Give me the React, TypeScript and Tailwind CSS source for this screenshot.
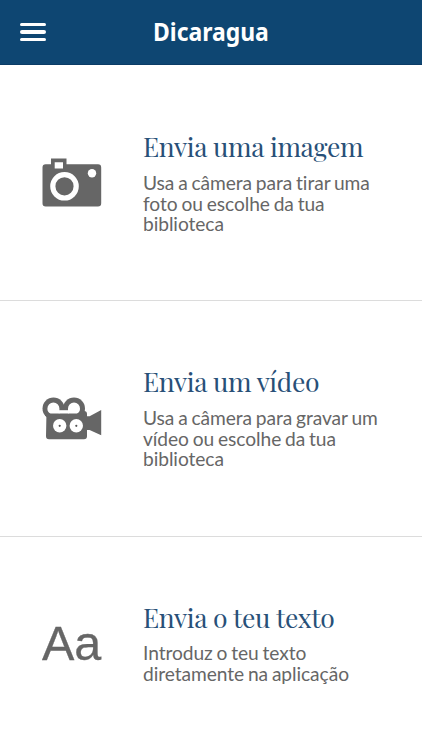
import type { ReactNode } from "react";

function CameraIcon() {
  return (
    <svg width="60" height="50" viewBox="0 0 60 50" className="block">
      <path
        fill="#666"
        fillRule="evenodd"
        d="M9 .5h15.5v5.8H56a3.2 3.2 0 0 1 3.2 3.2v35.7a3.2 3.2 0 0 1-3.2 3.2H3.7a3.2 3.2 0 0 1-3.2-3.2V9.5a3.2 3.2 0 0 1 3.2-3.2H9zM12.7 4.3v6.2H21V4.3z"
      />
      <circle cx="22.5" cy="28.3" r="11.7" fill="#666" stroke="#fff" strokeWidth="5.2" />
      <circle cx="50" cy="15.3" r="4.2" fill="#fff" />
    </svg>
  );
}

function VideoIcon() {
  return (
    <svg width="60" height="44" viewBox="0 0 60 44" className="block">
      <path
        fill="#666"
        d="M4.5 14H42a3 3 0 0 1 3 3v2.2h2.6L59.2 13v25.2L47.6 33H45v6.3a3 3 0 0 1-3 3H7a3 3 0 0 1-3-3z"
      />
      <circle cx="11.5" cy="11.5" r="11" fill="#666" />
      <circle cx="32" cy="11.5" r="11" fill="#666" />
      <path fill="#666" d="M3 15h38v4H3z" />
      <path fill="#fff" d="M5.4 11.5a6 6 0 1 1 12 0v5H8.5a5.2 5.2 0 0 1-3.1-5z" />
      <path fill="#fff" d="M26 11.5a6 6 0 1 1 12 0 5.2 5.2 0 0 1-3.1 5H26z" />
      <path fill="#fff" d="M16.8 13.2h9.8v3.3h-9.8z" />
      <circle cx="17.7" cy="28.8" r="6.7" fill="#fff" />
      <circle cx="34.3" cy="28.8" r="6.7" fill="#fff" />
      <circle cx="17.7" cy="28.8" r="1.1" fill="#555" />
      <circle cx="34.3" cy="28.8" r="1.1" fill="#555" />
    </svg>
  );
}

function Option({ icon, title, lines }: { icon: ReactNode; title: string; lines: string[] }) {
  return (
    <button className="group flex h-[236px] w-full shrink-0 items-start border-b border-[#dcdcdc] pl-[42px] text-left">
      <div className="w-[101px] shrink-0">{icon}</div>
      <div className="whitespace-nowrap pt-[62px] group-first:pt-[63px]">
        <h2 className="h-[45px] font-['Playfair_Display','Liberation_Serif',serif] text-[26.5px] leading-[36px] tracking-[-0.3px] text-[#285078] [word-spacing:-0.2px] group-last:h-[44px]">
          {title}
        </h2>
        <p className="font-[Lato,sans-serif] text-[19.2px] leading-[20.7px] tracking-[-0.07px] text-[#666] [font-variant-ligatures:none] [word-spacing:-1px]">
          {lines.map((line) => (
            <span key={line} className="block">
              {line}
            </span>
          ))}
        </p>
      </div>
    </button>
  );
}

export default function App() {
  return (
    <div className="flex h-[750px] w-full flex-col overflow-hidden bg-white">
      <header className="grid h-[65px] shrink-0 grid-cols-[1fr_auto_1fr] items-center border-b border-[#0b3c66] bg-[#0e4672] px-5">
        <button aria-label="Menu" className="flex w-[26px] flex-col gap-[4px]">
          <span className="h-[3.5px] rounded-full bg-white" />
          <span className="h-[3.5px] rounded-full bg-white" />
          <span className="h-[3.5px] rounded-full bg-white" />
        </button>
        <h1 className="mb-[2px] w-[116px] whitespace-nowrap font-['Noto_Sans',sans-serif] text-[25px] leading-[34px] font-bold text-white">
          <span className="inline-block origin-left scale-x-[0.917]">Dicaragua</span>
        </h1>
      </header>
      <main className="flex flex-col">
        <Option
          icon={<div className="pt-[93px]"><CameraIcon /></div>}
          title="Envia uma imagem"
          lines={["Usa a câmera para tirar uma", "foto ou escolhe da tua", "biblioteca"]}
        />
        <Option
          icon={<div className="pt-[96px]"><VideoIcon /></div>}
          title="Envia um vídeo"
          lines={["Usa a câmera para gravar um", "vídeo ou escolhe da tua", "biblioteca"]}
        />
        <Option
          icon={
            <div className="pt-[76px] font-['Liberation_Sans',sans-serif] text-[48.5px] leading-[60px] text-[#666] [-webkit-text-stroke:0.3px_#666]">
              Aa
            </div>
          }
          title="Envia o teu texto"
          lines={["Introduz o teu texto", "diretamente na aplicação"]}
        />
      </main>
    </div>
  );
}
